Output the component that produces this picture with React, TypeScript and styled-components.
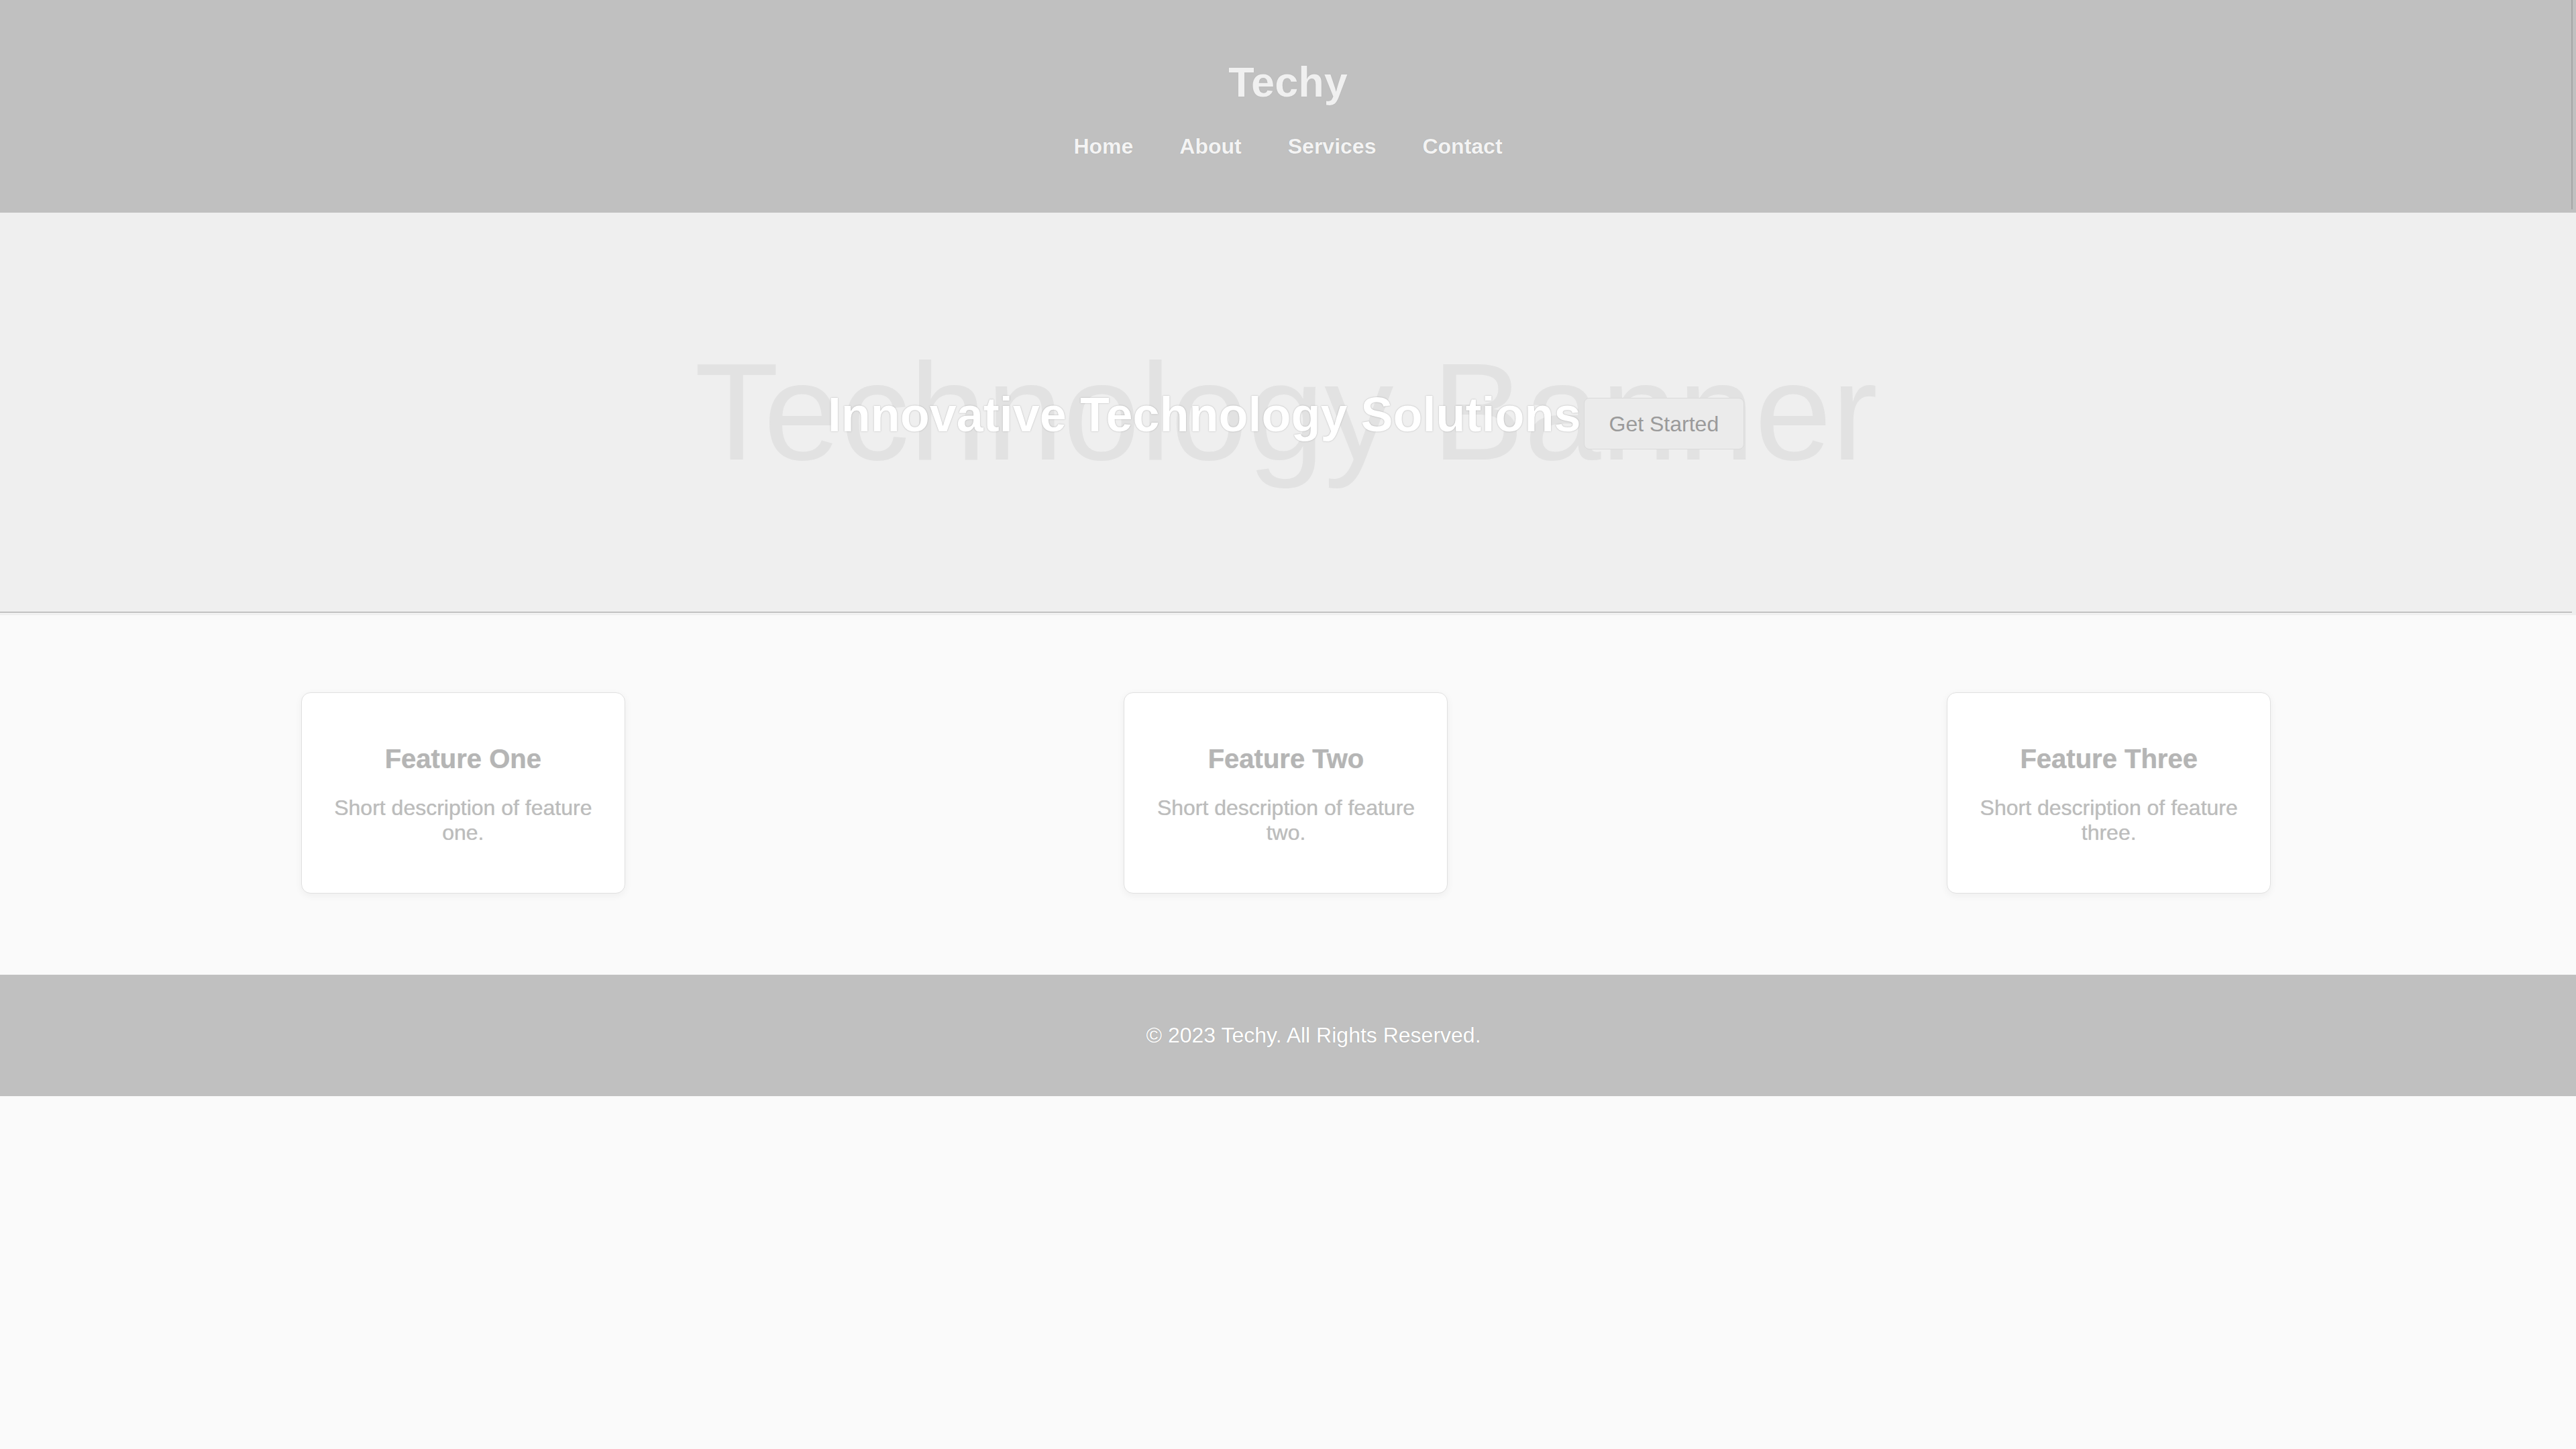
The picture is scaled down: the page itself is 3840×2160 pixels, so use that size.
import React from "react";
import styled, { createGlobalStyle } from "styled-components";

const Global = createGlobalStyle`
  html, body {
    margin: 0;
    padding: 0;
    background: #fafafa;
    font-family: "Liberation Sans", Arial, sans-serif;
  }
  * { box-sizing: border-box; }
`;

const Page = styled.div`
  display: flex;
  flex-direction: column;
  min-height: 2160px;
  background: #fafafa;
`;

const Header = styled.header`
  position: relative;
  background: #c0c0c0;
  padding: 86px 0 80px;
  display: flex;
  flex-direction: column;
  align-items: center;
  &::after {
    content: "";
    position: absolute;
    right: 5px;
    top: 0;
    width: 2px;
    height: 312px;
    background: #a6a6a6;
  }
`;

const Brand = styled.h1`
  margin: 0 0 42px;
  font-size: 63px;
  font-weight: 700;
  line-height: normal;
  color: #f0f0f0;
  text-shadow: 0 0 1px rgba(90, 90, 90, 0.35);
`;

const Nav = styled.nav`
  display: flex;
  gap: 69px;
`;

const NavLink = styled.a`
  font-size: 32px;
  font-weight: 700;
  line-height: normal;
  color: #f4f4f4;
  text-decoration: none;
  text-shadow: 0 0 1px rgba(90, 90, 90, 0.35);
`;

const Hero = styled.section`
  background: #efefef;
  padding-bottom: 4px;
`;

const HeroInner = styled.div`
  height: 596px;
  margin-right: 6px;
  border-bottom: 1px solid #9c9c9c;
  display: grid;
  place-items: center;
  overflow: hidden;
`;

const Backdrop = styled.div`
  grid-area: 1 / 1;
  font-size: 206px;
  line-height: normal;
  color: #e2e2e2;
  white-space: nowrap;
`;

const HeroRow = styled.div`
  grid-area: 1 / 1;
  display: flex;
  align-items: baseline;
  gap: 4px;
  margin-top: 18px;
`;

const HeroTitle = styled.h2`
  margin: 0;
  font-size: 72px;
  font-weight: 700;
  line-height: normal;
  color: #ffffff;
  white-space: nowrap;
  text-shadow: 0 0 2px rgba(60, 60, 60, 0.4);
`;

const CTA = styled.button`
  font-family: "Liberation Sans", Arial, sans-serif;
  font-size: 32px;
  line-height: normal;
  color: #9a9a9a;
  background: #ebebeb;
  border: 1px solid #dadada;
  border-radius: 8px;
  padding: 20px 37px 18px;
  cursor: pointer;
`;

const Features = styled.main`
  display: grid;
  grid-template-columns: repeat(3, 1fr);
  justify-items: center;
  padding: 115px 83px 121px 77px;
`;

const Card = styled.div`
  width: 483px;
  background: #ffffff;
  border: 1px solid #e0e0e0;
  border-radius: 14px;
  box-shadow: 0 3px 12px rgba(0, 0, 0, 0.05);
  padding: 76px 46px 71px;
  text-align: center;
`;

const CardTitle = styled.h3`
  margin: 0 0 32px;
  font-size: 40px;
  font-weight: 700;
  line-height: normal;
  color: #b5b5b5;
  text-shadow: 0 0 1px rgba(80, 80, 80, 0.35);
`;

const CardText = styled.p`
  margin: 0;
  font-size: 32px;
  line-height: normal;
  color: #bcbcbc;
  text-shadow: 0 0 1px rgba(80, 80, 80, 0.3);
`;

const Footer = styled.footer`
  background: #c0c0c0;
  padding: 72px 0 72px 76px;
  text-align: center;
  font-size: 32px;
  line-height: normal;
  color: #ffffff;
  text-shadow: 0 0 1px rgba(80, 80, 80, 0.35);
`;

const features = [
  { title: "Feature One", text: "Short description of feature one." },
  { title: "Feature Two", text: "Short description of feature two." },
  { title: "Feature Three", text: "Short description of feature three." },
];

export default function App() {
  return (
    <Page>
      <Global />
      <Header>
        <Brand>Techy</Brand>
        <Nav>
          <NavLink href="#">Home</NavLink>
          <NavLink href="#">About</NavLink>
          <NavLink href="#">Services</NavLink>
          <NavLink href="#">Contact</NavLink>
        </Nav>
      </Header>
      <Hero>
        <HeroInner>
          <Backdrop aria-hidden="true">Technology Banner</Backdrop>
          <HeroRow>
            <HeroTitle>Innovative Technology Solutions</HeroTitle>
            <CTA>Get Started</CTA>
          </HeroRow>
        </HeroInner>
      </Hero>
      <Features>
        {features.map((f) => (
          <Card key={f.title}>
            <CardTitle>{f.title}</CardTitle>
            <CardText>{f.text}</CardText>
          </Card>
        ))}
      </Features>
      <Footer>© 2023 Techy. All Rights Reserved.</Footer>
    </Page>
  );
}
